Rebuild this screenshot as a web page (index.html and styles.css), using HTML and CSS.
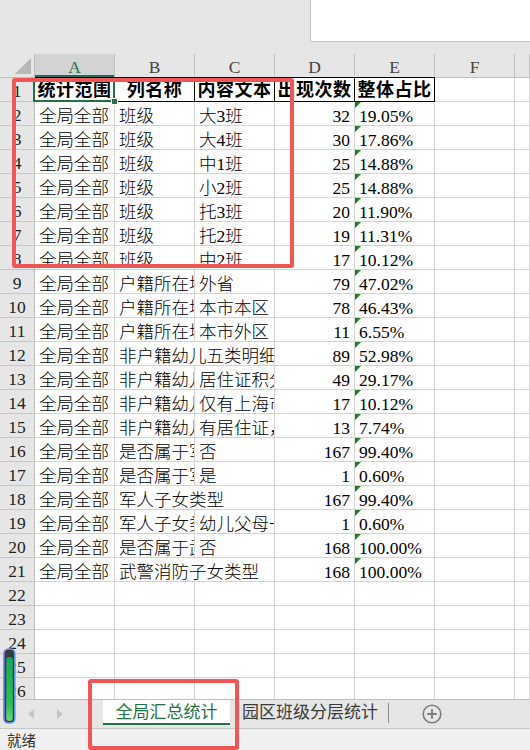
FILE: index.html
```html
<!DOCTYPE html>
<html lang="zh-CN">
<head>
<meta charset="utf-8">
<title>全局汇总统计</title>
<link rel="stylesheet" href="styles.css">
</head>
<body>
<div class="app">
  <div class="strip"><div class="namebox"></div></div>

  <div class="sheet">
    <div class="row colhead">
      <div class="corner"></div>
      <div class="ch sel">A</div><div class="ch">B</div><div class="ch">C</div><div class="ch">D</div><div class="ch">E</div><div class="ch">F</div><div class="ch"></div>
    </div>
    <div class="row r1">
      <div class="rh">1</div>
      <div class="h">统计范围</div><div class="h">列名称</div><div class="h">内容文本</div><div class="h">出现次数</div><div class="h">整体占比</div><div></div><div></div>
    </div>
    <div class="row"><div class="rh">2</div><div>全局全部</div><div>班级</div><div>大3班</div><div class="num">32</div><div class="pct">19.05%</div><div></div><div></div></div>
    <div class="row"><div class="rh">3</div><div>全局全部</div><div>班级</div><div>大4班</div><div class="num">30</div><div class="pct">17.86%</div><div></div><div></div></div>
    <div class="row"><div class="rh">4</div><div>全局全部</div><div>班级</div><div>中1班</div><div class="num">25</div><div class="pct">14.88%</div><div></div><div></div></div>
    <div class="row"><div class="rh">5</div><div>全局全部</div><div>班级</div><div>小2班</div><div class="num">25</div><div class="pct">14.88%</div><div></div><div></div></div>
    <div class="row"><div class="rh">6</div><div>全局全部</div><div>班级</div><div>托3班</div><div class="num">20</div><div class="pct">11.90%</div><div></div><div></div></div>
    <div class="row"><div class="rh">7</div><div>全局全部</div><div>班级</div><div>托2班</div><div class="num">19</div><div class="pct">11.31%</div><div></div><div></div></div>
    <div class="row"><div class="rh">8</div><div>全局全部</div><div>班级</div><div>中2班</div><div class="num">17</div><div class="pct">10.12%</div><div></div><div></div></div>
    <div class="row"><div class="rh">9</div><div>全局全部</div><div>户籍所在地</div><div>外省</div><div class="num">79</div><div class="pct">47.02%</div><div></div><div></div></div>
    <div class="row"><div class="rh">10</div><div>全局全部</div><div>户籍所在地</div><div>本市本区</div><div class="num">78</div><div class="pct">46.43%</div><div></div><div></div></div>
    <div class="row"><div class="rh">11</div><div>全局全部</div><div>户籍所在地</div><div>本市外区</div><div class="num">11</div><div class="pct">6.55%</div><div></div><div></div></div>
    <div class="row"><div class="rh">12</div><div>全局全部</div><div class="span2">非户籍幼儿五类明细</div><div class="num">89</div><div class="pct">52.98%</div><div></div><div></div></div>
    <div class="row"><div class="rh">13</div><div>全局全部</div><div>非户籍幼儿五类明细</div><div>居住证积分达标</div><div class="num">49</div><div class="pct">29.17%</div><div></div><div></div></div>
    <div class="row"><div class="rh">14</div><div>全局全部</div><div>非户籍幼儿五类明细</div><div>仅有上海市居住证</div><div class="num">17</div><div class="pct">10.12%</div><div></div><div></div></div>
    <div class="row"><div class="rh">15</div><div>全局全部</div><div>非户籍幼儿五类明细</div><div>有居住证，未满积分</div><div class="num">13</div><div class="pct">7.74%</div><div></div><div></div></div>
    <div class="row"><div class="rh">16</div><div>全局全部</div><div>是否属于军人子女</div><div>否</div><div class="num">167</div><div class="pct">99.40%</div><div></div><div></div></div>
    <div class="row"><div class="rh">17</div><div>全局全部</div><div>是否属于军人子女</div><div>是</div><div class="num">1</div><div class="pct">0.60%</div><div></div><div></div></div>
    <div class="row"><div class="rh">18</div><div>全局全部</div><div class="span2">军人子女类型</div><div class="num">167</div><div class="pct">99.40%</div><div></div><div></div></div>
    <div class="row"><div class="rh">19</div><div>全局全部</div><div>军人子女类型</div><div>幼儿父母一方为现役军人</div><div class="num">1</div><div class="pct">0.60%</div><div></div><div></div></div>
    <div class="row"><div class="rh">20</div><div>全局全部</div><div>是否属于武警消防子女</div><div>否</div><div class="num">168</div><div class="pct">100.00%</div><div></div><div></div></div>
    <div class="row"><div class="rh">21</div><div>全局全部</div><div class="span2">武警消防子女类型</div><div class="num">168</div><div class="pct">100.00%</div><div></div><div></div></div>
    <div class="row"><div class="rh">22</div><div></div><div></div><div></div><div></div><div></div><div></div><div></div></div>
    <div class="row"><div class="rh">23</div><div></div><div></div><div></div><div></div><div></div><div></div><div></div></div>
    <div class="row"><div class="rh">24</div><div></div><div></div><div></div><div></div><div></div><div></div><div></div></div>
    <div class="row"><div class="rh">25</div><div></div><div></div><div></div><div></div><div></div><div></div><div></div></div>
    <div class="row"><div class="rh">26</div><div></div><div></div><div></div><div></div><div></div><div></div><div></div></div>

    <div class="selection"><span class="handle"></span></div>
  </div>

  <div class="tabbar">
    <div class="tabnav">
      <svg class="arrow" width="6" height="10" viewBox="0 0 6 10"><polygon points="6,0 6,10 0,5"/></svg>
      <svg class="arrow" width="6" height="10" viewBox="0 0 6 10"><polygon points="0,0 0,10 6,5"/></svg>
    </div>
    <div class="tab active">全局汇总统计</div>
    <div class="tab">园区班级分层统计</div>
    <div class="tabsep"></div>
    <svg class="addsheet" width="20" height="20" viewBox="0 0 20 20">
      <circle cx="10" cy="10" r="8.8"/>
      <path d="M10 5.2v9.6M5.2 10h9.6"/>
    </svg>
  </div>

  <div class="statusbar">就绪</div>

  <div class="mark mark-table"></div>
  <div class="mark mark-tab"></div>

  <svg class="level-meter" width="13" height="76" viewBox="0 0 13 76">
    <defs>
      <linearGradient id="meterFill" x1="0" y1="0" x2="0" y2="1">
        <stop offset="0" stop-color="#1aa653"/>
        <stop offset="0.75" stop-color="#2fbf5e"/>
        <stop offset="1" stop-color="#6bd67a"/>
      </linearGradient>
      <linearGradient id="meterEdge" x1="0" y1="0" x2="1" y2="0">
        <stop offset="0" stop-color="#7a6ff0"/>
        <stop offset="1" stop-color="#5fb4ff"/>
      </linearGradient>
    </defs>
    <rect x="1" y="1" width="11" height="74" rx="4.5" fill="#3a3a3a" stroke="url(#meterEdge)" stroke-width="1.6"/>
    <rect x="3.2" y="9" width="6.6" height="64" rx="3" fill="url(#meterFill)"/>
  </svg>
</div>
</body>
</html>
```

FILE: styles.css
```css
* { box-sizing: border-box; }

html, body {
  margin: 0;
  padding: 0;
}

body {
  width: 530px;
  height: 750px;
  overflow: hidden;
  background: #e6e6e6;
  font-family: "Liberation Serif", "Noto Sans CJK SC", serif;
}

.app {
  position: relative;
  width: 530px;
  height: 750px;
  display: flex;
  flex-direction: column;
}

/* strip above the grid with the white name box on the right */
.strip {
  flex: none;
  height: 54px;
  display: flex;
  justify-content: flex-end;
}

.namebox {
  width: 220px;
  height: 42px;
  background: #fff;
  border-left: 1px solid #c4c4c4;
  border-bottom: 1px solid #c4c4c4;
}

/* worksheet grid */
.sheet {
  position: relative;
  flex: none;
  height: 645px;
  overflow: hidden;
  background: #fff;
}

.row {
  display: grid;
  grid-template-columns: 35px repeat(6, 80px) 1fr;
  height: 24px;
}

.row > div {
  border-right: 1px solid #d4d4d4;
  border-bottom: 1px solid #d4d4d4;
  overflow: hidden;
  white-space: nowrap;
  font-size: 17.5px;
  font-weight: 300;
  line-height: 18px;
  padding: 5px 4px 0;
  color: #000;
}

.row > .span2 { grid-column: span 2; }

.row > .num {
  text-align: right;
  padding-right: 4px;
}

.row > .pct { position: relative; }

/* green error-indicator corner */
.row > .pct::before {
  content: "";
  position: absolute;
  left: 0;
  top: 0;
  border-top: 6px solid #1b7d1b;
  border-right: 6px solid transparent;
}

/* column letters */
.colhead > div {
  background: #e6e6e6;
  border-right-color: #c2c2c2;
  border-bottom-color: #bdbdbd;
  color: #444;
  font-weight: 400;
  text-align: center;
  padding: 4px 0 0;
  line-height: 19px;
}

.colhead > .corner {
  position: relative;
  border-right-color: #bdbdbd;
}

.colhead > .corner::after {
  content: "";
  position: absolute;
  right: 3px;
  bottom: 3px;
  border-left: 16px solid transparent;
  border-bottom: 16px solid #b7b7b7;
}

.colhead > .sel {
  background: #d3d3d3;
  color: #217346;
  box-shadow: inset 0 -2px 0 #217346;
}

/* row numbers */
.row > .rh {
  background: #e6e6e6;
  border-right-color: #bdbdbd;
  border-bottom-color: #c6c6c6;
  color: #222;
  font-weight: 400;
  text-align: center;
  padding: 4px 0 0;
  line-height: 19px;
}

/* bold header row with black cell borders */
.r1 > .h {
  font-weight: bold;
  font-size: 18px;
  letter-spacing: 0.5px;
  text-align: center;
  padding: 2px 0 0;
  line-height: 20px;
  border-right-color: #000;
  border-bottom-color: #000;
  box-shadow: 0 -1px 0 #000;
}

/* active cell A1 */
.selection {
  position: absolute;
  left: 33px;
  top: 24px;
  width: 82px;
  height: 24px;
  border: 2px solid #217346;
}

.handle {
  position: absolute;
  right: -5px;
  bottom: -5px;
  width: 7px;
  height: 7px;
  background: #217346;
  border: 1px solid #fff;
}

/* sheet tabs */
.tabbar {
  flex: none;
  height: 30px;
  display: flex;
  align-items: flex-start;
  border-top: 1px solid #c0c0c0;
  border-bottom: 1px solid #c6c6c6;
  background: #e6e6e6;
  font-family: "Noto Sans CJK SC", "Noto Sans", sans-serif;
}

.tabnav {
  width: 103px;
  height: 28px;
  display: flex;
  align-items: center;
  gap: 23px;
  padding-left: 28px;
}

.arrow { fill: #c4c4c4; }

.tab {
  font-size: 17px;
  line-height: 22px;
  color: #3a3a3a;
  padding-left: 12px;
}

.tab.active {
  width: 127px;
  height: 25px;
  padding-left: 0;
  text-align: center;
  background: #fff;
  color: #217346;
  border-bottom: 2px solid #217346;
}

.tabsep {
  width: 1px;
  height: 20px;
  margin: 3px 0 0 10px;
  background: #8a8a8a;
}

.addsheet {
  margin: 4px 0 0 33px;
  fill: none;
  stroke: #7c7c7c;
}

.addsheet circle { stroke-width: 1.6; }
.addsheet path { stroke-width: 1.9; }

/* status bar */
.statusbar {
  flex: 1;
  background: #f0f0f0;
  font-family: "Noto Sans CJK SC", "Noto Sans", sans-serif;
  font-size: 14.5px;
  line-height: 21px;
  color: #333;
  padding-left: 7px;
}

/* red annotation frames */
.mark {
  position: absolute;
  border: 4px solid #f15656;
  border-radius: 3px;
  pointer-events: none;
}

.mark-table {
  left: 12px;
  top: 78px;
  width: 282px;
  height: 190px;
}

.mark-tab {
  left: 88px;
  top: 679px;
  width: 151px;
  height: 71px;
}

.level-meter {
  position: absolute;
  left: 3px;
  top: 648px;
}
```
